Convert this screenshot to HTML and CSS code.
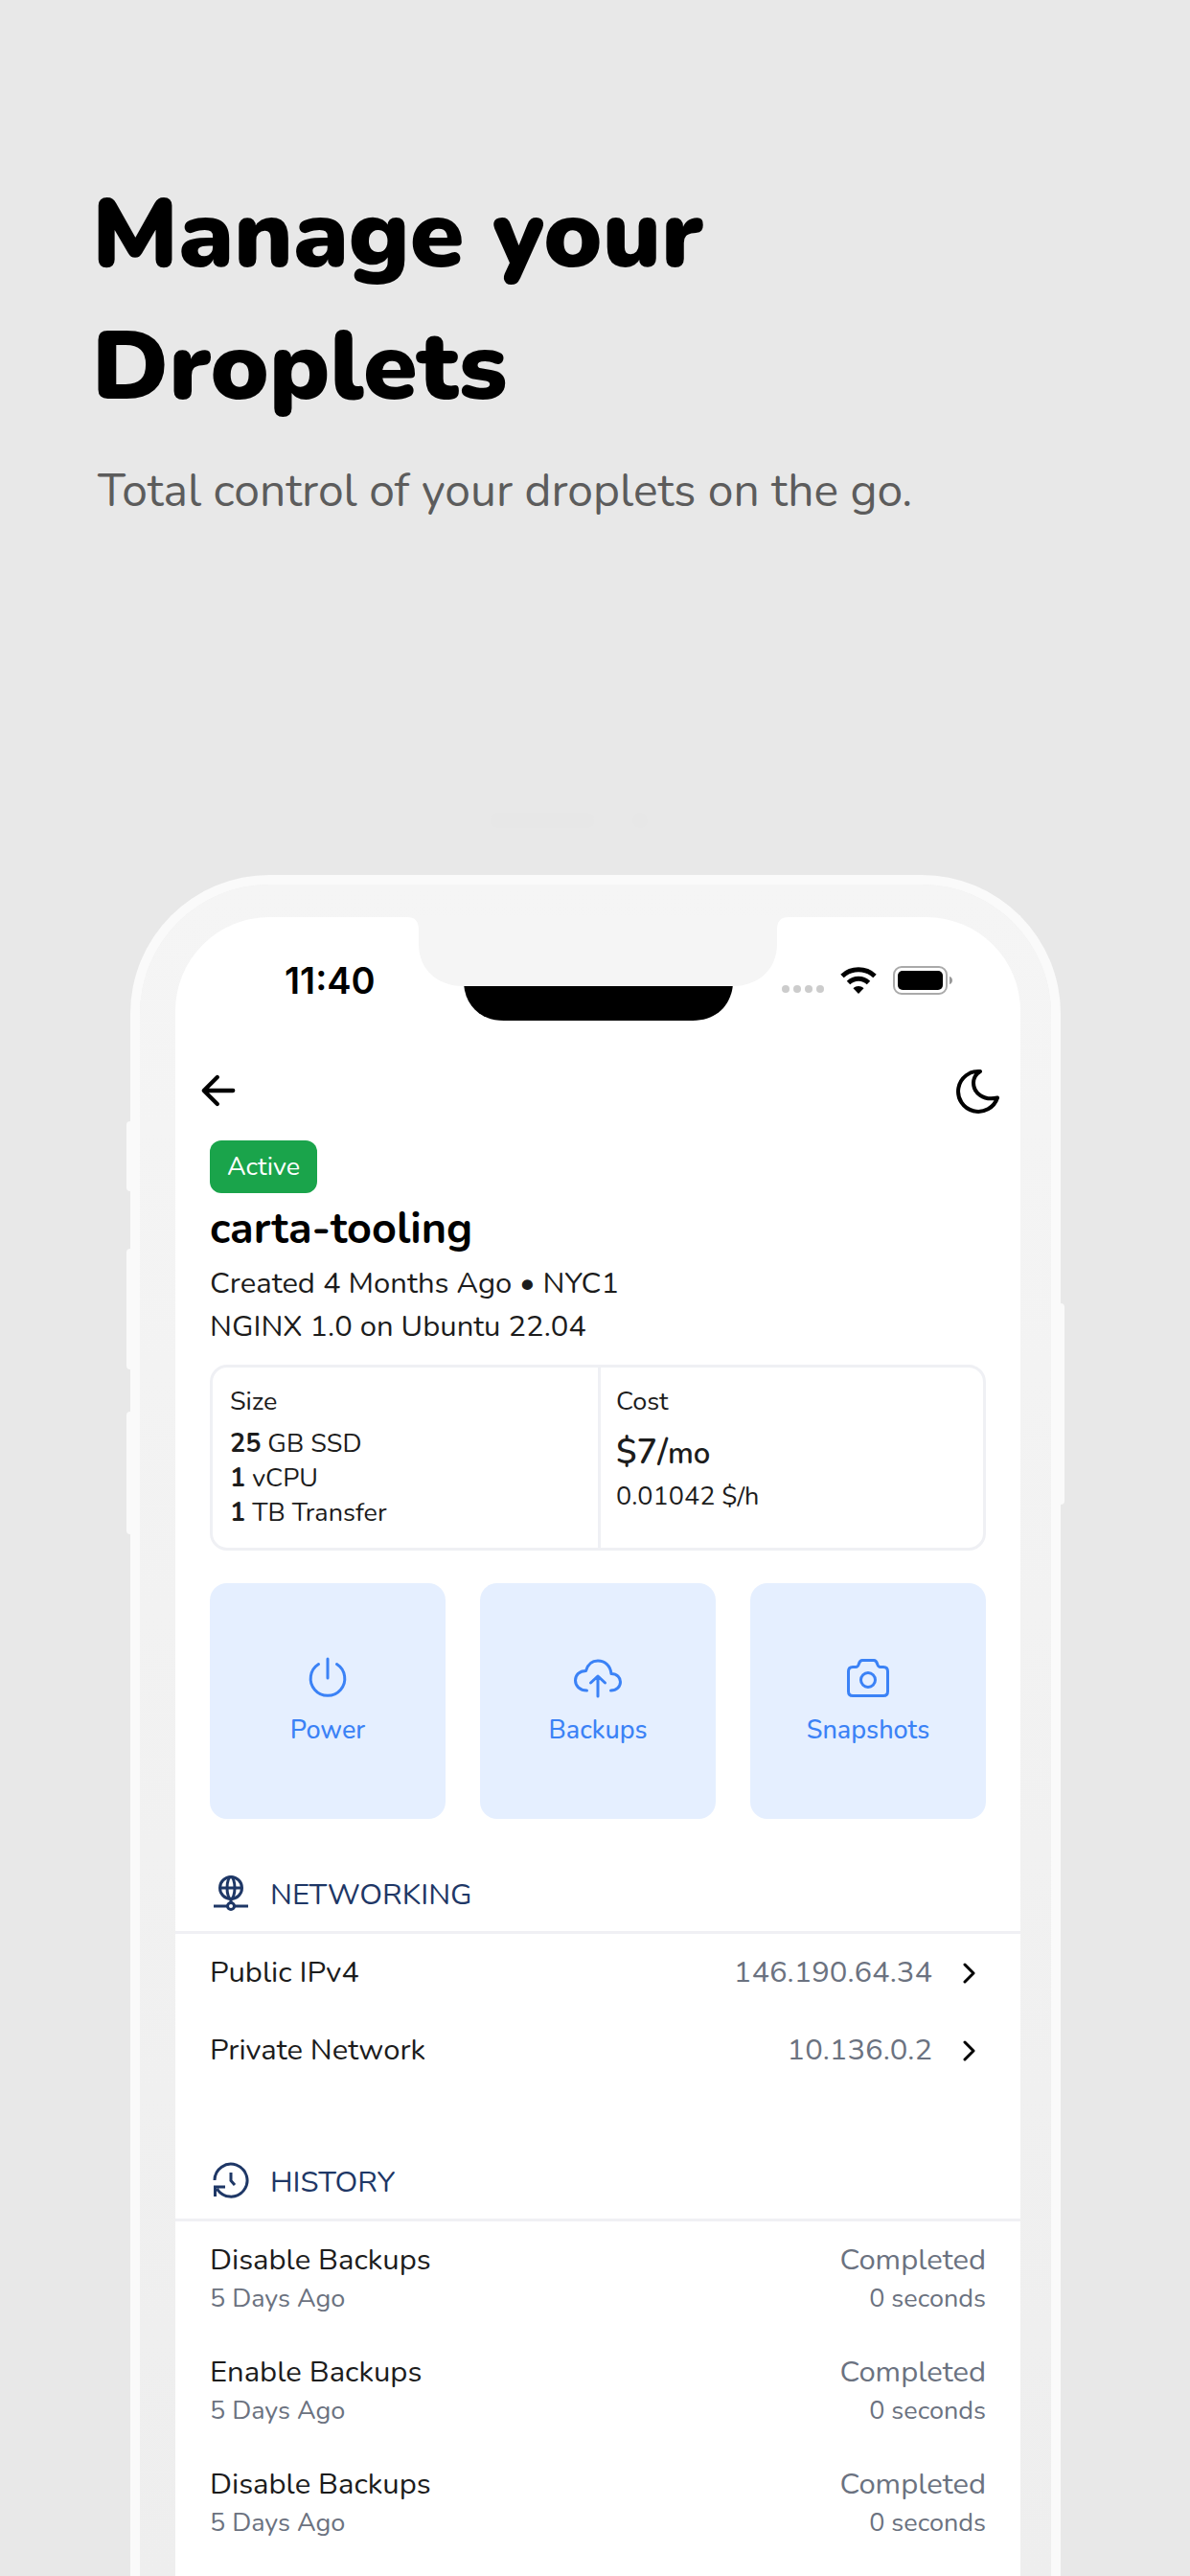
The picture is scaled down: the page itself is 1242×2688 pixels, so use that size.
FILE: index.html
```html
<!DOCTYPE html>
<html lang="en">
<head>
<meta charset="utf-8">
<title>Manage your Droplets</title>
<meta name="viewport" content="width=device-width, initial-scale=1">
<link rel="stylesheet" href="styles.css">
</head>
<body>
<header class="hero">
  <h1 class="hero-title">Manage your<br>Droplets</h1>
  <p class="hero-text">Total control of your droplets on the go.</p>
</header>

<div class="speaker" aria-hidden="true"><span class="speaker-bar"></span><span class="speaker-dot"></span></div>

<main class="phone">
  <span class="key key-mute"></span>
  <span class="key key-up"></span>
  <span class="key key-down"></span>
  <span class="key key-power"></span>

  <div class="screen">
    <div class="status">
      <span class="status-time">11:40</span>
      <svg class="status-notch" viewBox="0 0 374 108" aria-hidden="true">
        <path d="M47 70H328C326 93 310 108 286 108H89C65 108 49 93 47 70Z" fill="#000"/>
        <path d="M-12 0C-3 0 0 5 0 14V28C0 55 20 72 46 72H328C354 72 374 55 374 28V14C374 5 377 0 386 0V-2H-12Z" fill="#f5f5f5"/>
      </svg>
      <div class="status-icons">
        <svg width="44" height="28" viewBox="0 0 44 28" fill="#ccc" aria-hidden="true">
          <circle cx="4" cy="23" r="4"/><circle cx="16" cy="23" r="4"/><circle cx="28" cy="23" r="4"/><circle cx="40" cy="23" r="4"/>
        </svg>
        <svg width="38" height="28" viewBox="0 0 38 28" fill="none" stroke="#000" stroke-width="5" aria-hidden="true">
          <path d="M2 9.500C11.500 .6 26.500 .6 36 9.500"/>
          <path d="M8.500 16.500C14.500 10.800 23.500 10.800 29.500 16.500"/>
          <path d="M13.500 22.300C16.500 19.200 21.500 19.200 24.500 22.300L19 28Z" fill="#000" stroke="none"/>
        </svg>
        <svg width="62" height="30" viewBox="0 0 62 30" aria-hidden="true">
          <rect x="1" y="1" width="55" height="28" rx="8" fill="none" stroke="#aaa" stroke-width="2"/>
          <rect x="5" y="5" width="47" height="20" rx="5" fill="#000"/>
          <path d="M59 11C63 12 63 18 59 19Z" fill="#999"/>
        </svg>
      </div>
    </div>

    <nav class="appbar">
      <button class="icon-button" type="button" aria-label="Back">
        <svg width="50" height="50" viewBox="0 0 512 512" fill="none" stroke="#000" stroke-width="44" stroke-linecap="round" stroke-linejoin="round"><path d="M244 400L100 256l144-144M120 256h292"/></svg>
      </button>
      <button class="icon-button" type="button" aria-label="Dark mode">
        <svg width="50" height="50" viewBox="0 0 50 50" fill="none" stroke="#000" stroke-width="4" stroke-linejoin="round"><path d="M28 5A21 21 0 1 0 46 32.500C31 36 21 27 21 17C21 12 23 8 28 5Z"/></svg>
      </button>
    </nav>

    <section class="summary">
      <span class="badge">Active</span>
      <h2 class="name">carta-tooling</h2>
      <p class="meta">Created 4 Months Ago • NYC1</p>
      <p class="meta">NGINX 1.0 on Ubuntu 22.04</p>

      <div class="plan">
        <div class="plan-cell">
          <h3 class="plan-label">Size</h3>
          <p class="plan-line"><b>25</b> GB SSD</p>
          <p class="plan-line"><b>1</b> vCPU</p>
          <p class="plan-line"><b>1</b> TB Transfer</p>
        </div>
        <div class="plan-cell">
          <h3 class="plan-label">Cost</h3>
          <p class="plan-price">$7/<span class="plan-unit">mo</span></p>
          <p class="plan-line">0.01042 $/h</p>
        </div>
      </div>

      <div class="actions">
        <button class="action" type="button">
          <svg width="52" height="52" viewBox="0 0 52 52" fill="none" stroke="#3b82f6" stroke-width="3" stroke-linecap="round"><path d="M26 7V27M16.500 12.500A17.800 17.800 0 1 0 35.500 12.500"/></svg>
          Power
        </button>
        <button class="action" type="button">
          <svg width="52" height="52" viewBox="0 0 52 52" fill="none" stroke="#3b82f6" stroke-width="3" stroke-linecap="round" stroke-linejoin="round"><path d="M14.500 40C7 40 2.500 35 2.500 29.500C2.500 24 6.500 19.500 13.500 19.500C15.500 12.500 20.500 9 26 9C33.500 9 39 14 40 22.500C46 22.500 49.500 26.500 49.500 31C49.500 36 45.500 40 39.500 40M26 46V25M18.500 32L26 25L33.500 32"/></svg>
          Backups
        </button>
        <button class="action" type="button">
          <svg width="52" height="52" viewBox="0 0 52 52" fill="none" stroke="#3b82f6" stroke-width="3" stroke-linejoin="round"><path d="M10 15.500H13C15 15.500 15.800 14.500 16.300 12.500C17 10 17.800 8.500 20 8.500H32C34.200 8.500 35 10 35.700 12.500C36.200 14.500 37 15.500 39 15.500H42C45 15.500 46.500 17 46.500 20V41C46.500 44 45 45.500 42 45.500H10C7 45.500 5.500 44 5.500 41V20C5.500 17 7 15.500 10 15.500Z"/><circle cx="26" cy="29" r="7.500"/></svg>
          Snapshots
        </button>
      </div>
    </section>

    <section class="group">
      <h3 class="group-title">
        <svg width="44" height="44" viewBox="0 0 44 44" fill="none" stroke="#1e3766" stroke-width="3"><circle cx="22" cy="15" r="11.500"/><ellipse cx="22" cy="15" rx="4" ry="11.500"/><path d="M10.500 15H33.500M22 26.500V30M4 34H18M26 34H40"/><circle cx="22" cy="34" r="3.500"/></svg>
        NETWORKING
      </h3>
      <a class="link-row" href="#ipv4"><span>Public IPv4</span><span class="link-value">146.190.64.34</span>
        <svg width="14" height="24" viewBox="0 0 14 24" fill="none" stroke="#000" stroke-width="3" stroke-linecap="round" stroke-linejoin="round"><path d="M2 3l9 9-9 9"/></svg></a>
      <a class="link-row" href="#private"><span>Private Network</span><span class="link-value">10.136.0.2</span>
        <svg width="14" height="24" viewBox="0 0 14 24" fill="none" stroke="#000" stroke-width="3" stroke-linecap="round" stroke-linejoin="round"><path d="M2 3l9 9-9 9"/></svg></a>
    </section>

    <section class="group">
      <h3 class="group-title">
        <svg width="44" height="44" viewBox="0 0 44 44" fill="none" stroke="#1e3766" stroke-width="3"><path d="M5 20A17 17 0 1 1 7.500 29M5.500 37V27H16M22 12V20.500L26 25"/></svg>
        HISTORY
      </h3>
      <ul class="history">
        <li class="history-row"><div><p class="event">Disable Backups</p><p class="event-note">5 Days Ago</p></div><div class="event-end"><p class="event">Completed</p><p class="event-note">0 seconds</p></div></li>
        <li class="history-row"><div><p class="event">Enable Backups</p><p class="event-note">5 Days Ago</p></div><div class="event-end"><p class="event">Completed</p><p class="event-note">0 seconds</p></div></li>
        <li class="history-row"><div><p class="event">Disable Backups</p><p class="event-note">5 Days Ago</p></div><div class="event-end"><p class="event">Completed</p><p class="event-note">0 seconds</p></div></li>
      </ul>
    </section>
  </div>
</main>
</body>
</html>
```
FILE: styles.css
```css
* { box-sizing: border-box; margin: 0; padding: 0; }

body {
  min-height: 100vh;
  display: flex;
  flex-direction: column;
  background: #e8e8e8;
  color: #1c1c1c;
  font-family: "Nunito", "Open Sans", sans-serif;
}

button { border: 0; background: none; font: inherit; cursor: pointer; }
svg { display: block; flex: none; }

.hero { padding: 176px 96px 0; }
.hero-title { font-size: 102px; line-height: 138px; font-weight: 900; color: #000; }
.hero-text { margin-top: 27px; padding-left: 6px; font-size: 48px; line-height: 66px; color: #5c5c5c; }

.speaker { display: flex; justify-content: center; gap: 40px; margin: 303px 0 49px; padding-right: 54px; }
.speaker-bar { width: 108px; height: 16px; border-radius: 8px; background: #e7e7e7; }
.speaker-dot { width: 16px; height: 16px; border-radius: 8px; background: #e7e7e7; }

/* Phone body, running off the bottom of the page */
.phone {
  position: relative;
  flex: 1;
  display: flex;
  margin: 0 135px 0 136px;
  padding: 34px 32px 0 37px;
  border: 10px solid #fafafa;
  border-bottom: 0;
  border-radius: 145px 145px 0 0;
  background: linear-gradient(#f5f5f5, #eee) padding-box;
}
.key { position: absolute; width: 4px; background: #fafafa; border-radius: 4px 0 0 4px; left: -14px; }
.key-mute { top: 247px; height: 73px; }
.key-up { top: 380px; height: 126px; }
.key-down { top: 550px; height: 128px; }
.key-power { top: 437px; height: 210px; left: auto; right: -14px; border-radius: 0 4px 4px 0; }

.screen { flex: 1; border-radius: 98px 98px 0 0; background: #fff; }

.status { display: grid; grid-template-columns: 1fr 374px 1fr; }
.status-time { padding: 44px 0 0 114px; font-family: "Inter", sans-serif; font-size: 38px; line-height: 44px; font-weight: 600; color: #000; }
.status-notch { width: 100%; overflow: visible; }
.status-icons { display: flex; align-items: center; gap: 17px; height: 44px; margin-top: 44px; padding-left: 5px; }

.appbar { display: flex; justify-content: space-between; padding: 48px 20px 27px; }
.icon-button { width: 50px; height: 50px; }

.summary { padding: 0 36px; }
.badge { display: inline-block; padding: 0 18px; border-radius: 12px; background: #1aa44b; color: #fff; font-size: 27px; line-height: 55px; vertical-align: top; }
.name { margin-top: 8px; font-size: 45px; line-height: 60px; font-weight: 700; color: #000; }
.meta { font-size: 31px; line-height: 45px; }
.name + .meta { margin-top: 4px; }

.plan { display: grid; grid-template-columns: 1fr 1fr; margin-top: 17px; border: 3px solid #eff0f4; border-radius: 18px; }
.plan-cell { padding: 18px; }
.plan-cell + .plan-cell { padding-left: 16px; border-left: 3px solid #eff0f4; }
.plan-label { margin-bottom: 8px; font-size: 27px; line-height: 36px; font-weight: 400; }
.plan-line { font-size: 27px; line-height: 36px; }
.plan-price { font-size: 36px; line-height: 54px; font-weight: 600; }
.plan-unit { font-size: 31px; }

.actions { display: grid; grid-template-columns: repeat(3, 1fr); gap: 36px; margin-top: 34px; }
.action { aspect-ratio: 1; display: flex; flex-direction: column; align-items: center; justify-content: center; gap: 10px; border-radius: 18px; background: #e5efff; color: #3b82f6; font-size: 27px; line-height: 40px; font-weight: 500; }

.group { padding: 57px 0 18px; }
.group + .group { padding-bottom: 0; }
.group-title { display: flex; align-items: center; gap: 19px; padding: 0 36px 16px; border-bottom: 3px solid #f0f0f4; font-size: 31px; line-height: 44px; font-weight: 400; color: #1e3766; }

.link-row { display: flex; align-items: center; padding: 18px 46px 18px 36px; color: inherit; text-decoration: none; font-size: 31px; line-height: 45px; }
.link-value { margin-left: auto; margin-right: 32px; color: #6b7280; }

.history { list-style: none; }
.history-row { display: flex; justify-content: space-between; padding: 18px 36px; }
.event { font-size: 31px; line-height: 45px; }
.event-note { font-size: 27px; line-height: 36px; color: #6b7280; }
.event-end { text-align: right; color: #6b7280; }
```
